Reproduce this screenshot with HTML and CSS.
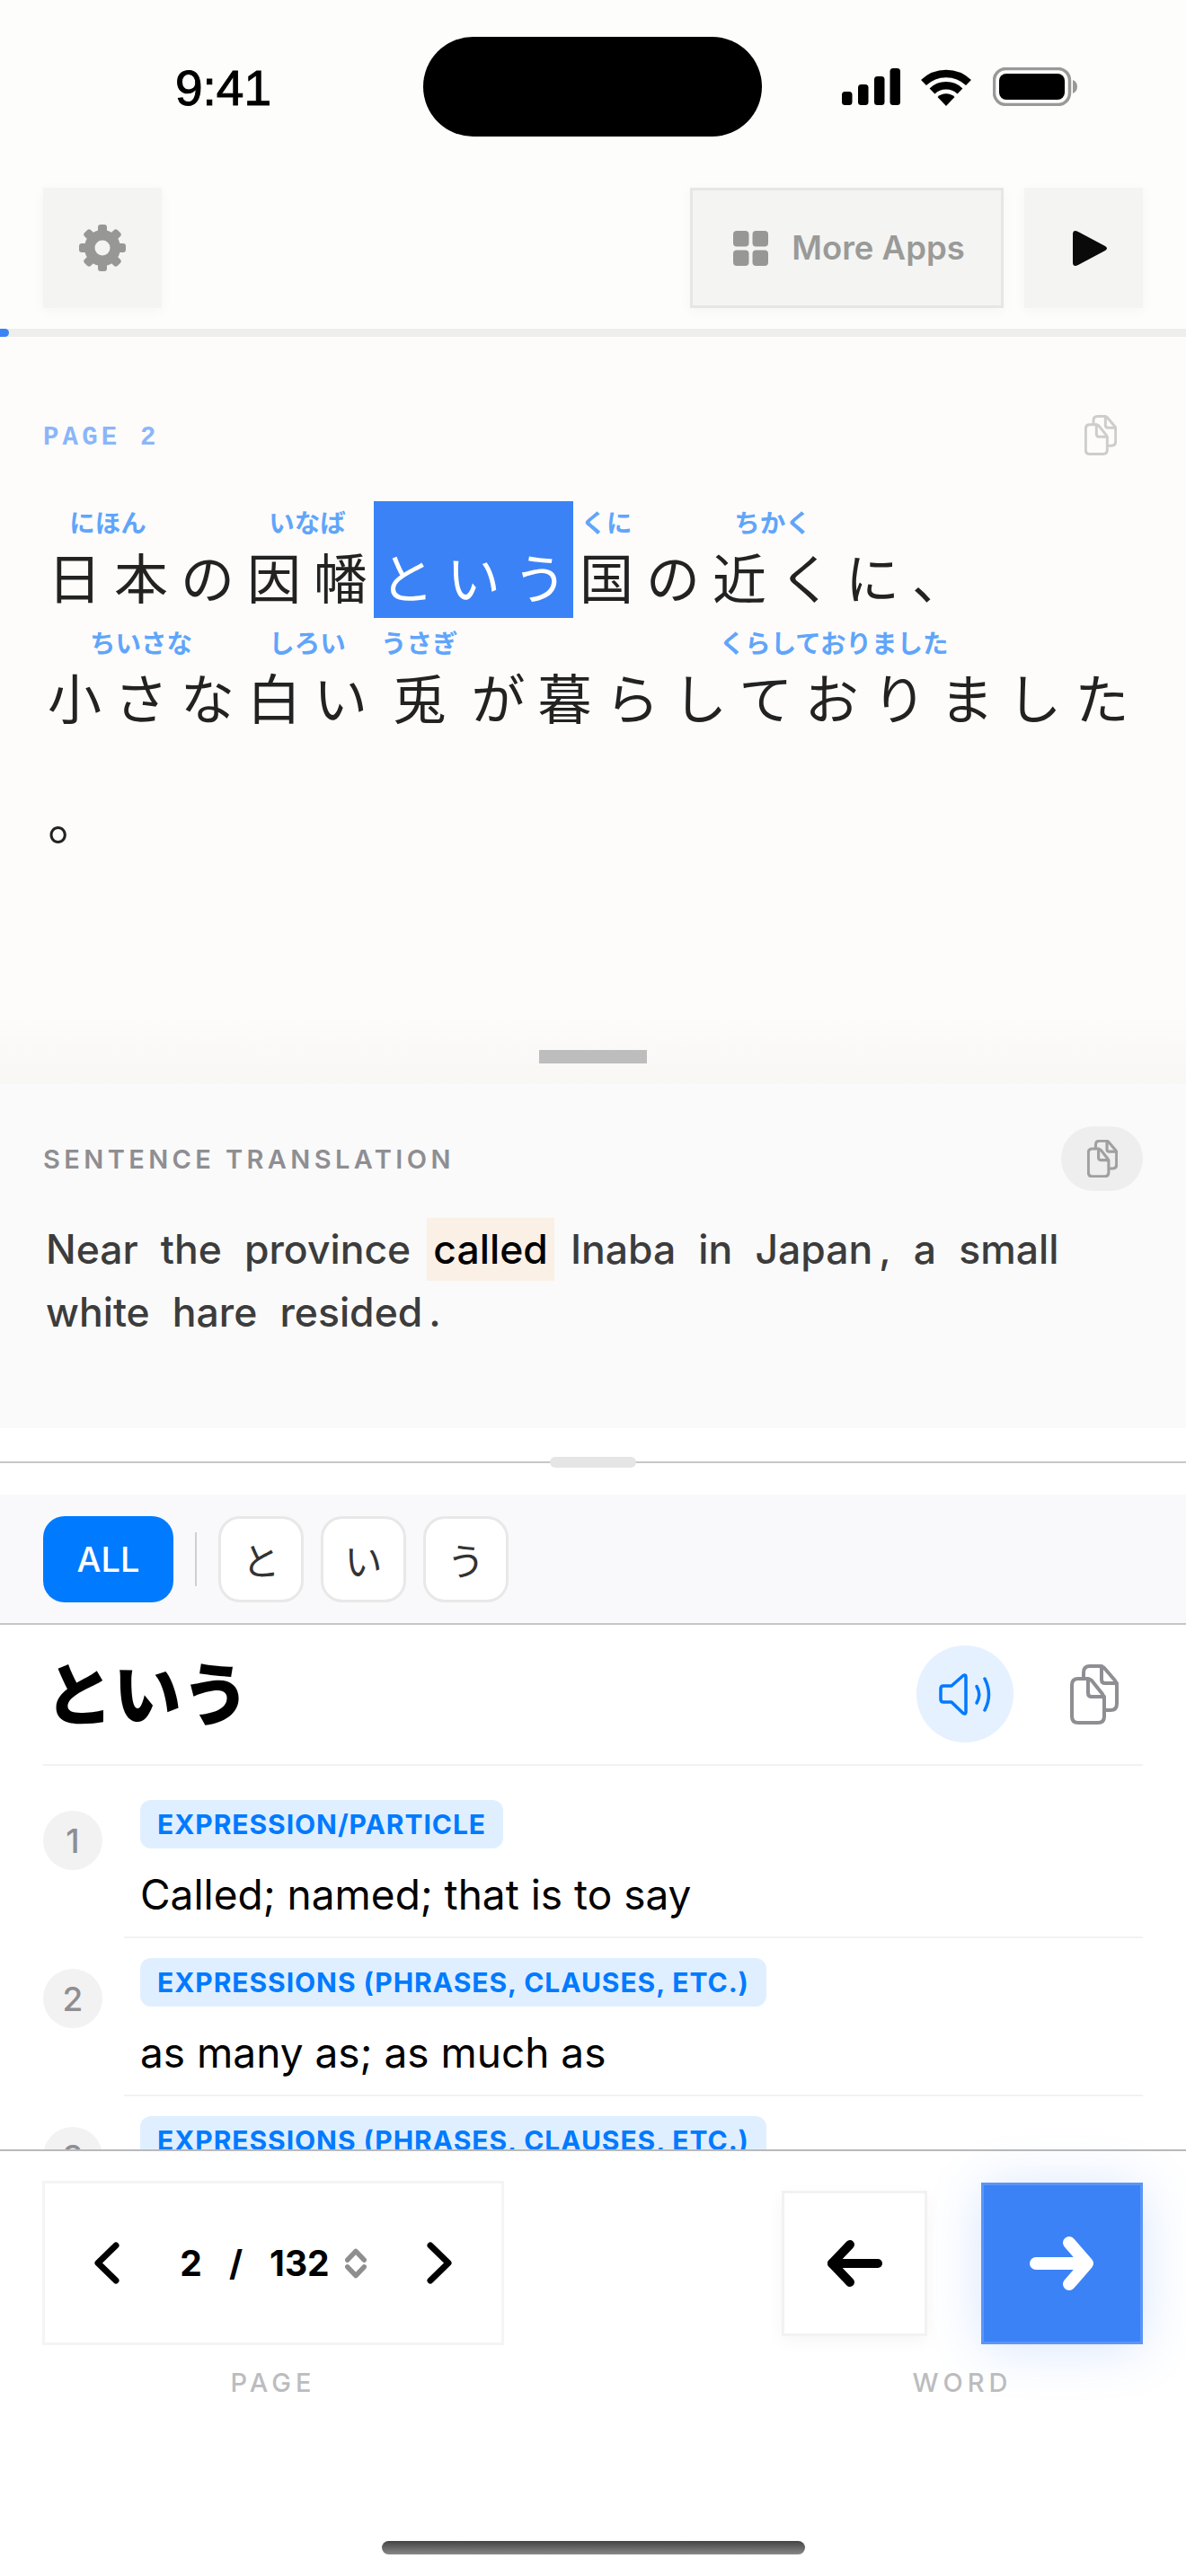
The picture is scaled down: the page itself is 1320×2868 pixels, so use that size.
FILE: index.html
```html
<!DOCTYPE html>
<html lang="ja">
<head>
<meta charset="utf-8">
<title>Reader</title>
<link rel="stylesheet" href="styles.css">
</head>
<body>
<svg class="sprite" aria-hidden="true">
  <symbol id="copy" viewBox="0 0 54 67">
    <path d="M15 15V9Q15 2 22 2H33Q36 2 38 4L50 18Q52 21 52 24V44Q52 51 45 51H39"/>
    <path d="M35 2V17Q35 21 39 21H52"/>
    <path d="M9 16H19Q22 16 24 18L36 33Q38 36 38 39V58Q38 65 31 65H9Q2 65 2 58V23Q2 16 9 16Z"/>
    <path d="M20 16V32Q20 36 24 36H38"/>
  </symbol>
</svg>

<header class="status">
  <div class="time-zone"><span class="time">9:41</span></div>
  <div class="island"></div>
  <div class="status-icons">
    <svg class="signal" viewBox="0 0 65 41"><rect x="0" y="26" width="11.5" height="15" rx="3.5"/><rect x="18" y="18" width="11.5" height="23" rx="3.5"/><rect x="36" y="9" width="11.5" height="32" rx="3.5"/><rect x="53.5" y="0" width="11.5" height="41" rx="3.5"/></svg>
    <svg class="wifi" viewBox="0 0 58 43"><path class="arc" d="M4 17A36 36 0 0 1 54 17"/><path class="arc" d="M13.5 26.5A22.5 22.5 0 0 1 44.500 26.500"/><path d="M29 43L19.500 33A14 14 0 0 1 38.500 33Z"/></svg>
    <svg class="battery" viewBox="0 0 94 43"><rect class="shell" x="1.500" y="1.500" width="84" height="40" rx="13"/><rect x="7" y="7" width="73" height="29" rx="8"/><path class="cap" d="M89 14Q94 16 94 21.500Q94 27 89 29Z"/></svg>
  </div>
</header>

<nav class="toolbar">
  <button class="tool tool-square">
    <svg class="gear" viewBox="-26 -26 52 52">
      <circle class="gear-ring" r="14.25"/>
      <rect x="-5" y="-26" width="10" height="11" rx="3"/>
      <rect x="-5" y="-26" width="10" height="11" rx="3" transform="rotate(45)"/>
      <rect x="-5" y="-26" width="10" height="11" rx="3" transform="rotate(90)"/>
      <rect x="-5" y="-26" width="10" height="11" rx="3" transform="rotate(135)"/>
      <rect x="-5" y="-26" width="10" height="11" rx="3" transform="rotate(180)"/>
      <rect x="-5" y="-26" width="10" height="11" rx="3" transform="rotate(225)"/>
      <rect x="-5" y="-26" width="10" height="11" rx="3" transform="rotate(270)"/>
      <rect x="-5" y="-26" width="10" height="11" rx="3" transform="rotate(315)"/>
    </svg>
  </button>
  <div class="toolbar-right">
    <button class="tool tool-apps">
      <svg class="apps" viewBox="0 0 39 39"><rect width="17.500" height="17.500" rx="4"/><rect x="21.500" width="17.500" height="17.500" rx="4"/><rect y="21.500" width="17.500" height="17.500" rx="4"/><rect x="21.500" y="21.500" width="17.500" height="17.500" rx="4"/></svg>
      <span>More Apps</span>
    </button>
    <button class="tool tool-square">
      <svg class="play" viewBox="0 0 38 41"><path d="M0 5Q0-1 6 2L36 18Q40 20.500 36 23L6 39Q0 42 0 36Z"/></svg>
    </button>
  </div>
</nav>

<div class="progress"><div class="progress-fill"></div></div>

<main class="reader">
  <div class="reader-head">
    <span class="page-tag">PAGE 2</span>
    <svg class="copy copy-faint"><use href="#copy"/></svg>
  </div>
  <div class="sentence">
    <div class="row">
      <div class="word"><span class="rt">にほん</span><span class="base">日本</span></div>
      <div class="word"><span class="rt"></span><span class="base">の</span></div>
      <div class="word"><span class="rt">いなば</span><span class="base">因幡</span></div>
      <div class="word word-active"><span class="rt"></span><span class="base">という</span></div>
      <div class="word"><span class="rt rt-tight">くに</span><span class="base">国</span></div>
      <div class="word"><span class="rt"></span><span class="base">の</span></div>
      <div class="word"><span class="rt">ちかく</span><span class="base">近く</span></div>
      <div class="word"><span class="rt"></span><span class="base">に</span></div>
      <div class="word"><span class="rt"></span><span class="base">、</span></div>
    </div>
    <div class="row">
      <div class="word"><span class="rt">ちいさな</span><span class="base">小さな</span></div>
      <div class="word"><span class="rt">しろい</span><span class="base">白い</span></div>
      <div class="word"><span class="rt rt-tight">うさぎ</span><span class="base">兎</span></div>
      <div class="word"><span class="rt"></span><span class="base">が</span></div>
      <div class="word"><span class="rt">くらしておりました</span><span class="base base-long">暮らしておりました</span></div>
    </div>
    <div class="row">
      <div class="word"><span class="rt"></span><span class="base">。</span></div>
    </div>
  </div>
  <div class="reader-handle"></div>
</main>

<section class="translation">
  <div class="translation-head">
    <span class="section-label">SENTENCE TRANSLATION</span>
    <button class="pill"><svg class="copy copy-pill"><use href="#copy"/></svg></button>
  </div>
  <p class="translation-text">
    <span class="tok">Near</span> <span class="tok">the</span> <span class="tok">province</span> <span class="tok tok-hit">called</span> <span class="tok">Inaba</span> <span class="tok">in</span> <span class="tok">Japan</span><span class="punct">,</span> <span class="tok">a</span> <span class="tok">small</span> <span class="tok">white</span> <span class="tok">hare</span> <span class="tok">resided</span><span class="punct">.</span>
  </p>
</section>

<div class="splitter"><div class="splitter-grip"></div></div>

<div class="tabs">
  <button class="tab-all">ALL</button>
  <span class="tab-sep"></span>
  <button class="chip">と</button>
  <button class="chip">い</button>
  <button class="chip">う</button>
</div>

<section class="detail">
  <div class="detail-head">
    <h1 class="headword">という</h1>
    <button class="speak">
      <svg class="speaker" viewBox="0 0 59 47"><path d="M5 14H14L27 2.500Q30 1 30 4V43Q30 46 27 44.500L14 32H5Q2 32 2 29V17Q2 14 5 14Z"/><path d="M42 14.500Q47.500 23.500 42 33"/><path d="M51 6Q60 23.500 51 41"/></svg>
    </button>
    <svg class="copy copy-big"><use href="#copy"/></svg>
  </div>
  <ol class="senses">
    <li class="sense">
      <span class="num">1</span>
      <div class="sense-body"><span class="tag">EXPRESSION/PARTICLE</span><p class="gloss">Called; named; that is to say</p></div>
    </li>
    <li class="sense">
      <span class="num">2</span>
      <div class="sense-body"><span class="tag">EXPRESSIONS (PHRASES, CLAUSES, ETC.)</span><p class="gloss">as many as; as much as</p></div>
    </li>
    <li class="sense">
      <span class="num">3</span>
      <div class="sense-body"><span class="tag">EXPRESSIONS (PHRASES, CLAUSES, ETC.)</span></div>
    </li>
  </ol>
</section>

<footer class="footer">
  <div class="footer-row">
    <div class="group group-page">
      <div class="pager">
        <svg class="chev" viewBox="0 0 28 47"><path d="M24 4L4 23.500L24 43"/></svg>
        <div class="pager-value">
          <span>2</span><span>/</span><span>132</span>
          <svg class="updown" viewBox="0 0 22 31"><path d="M2.500 12L11 3L19.500 12"/><path d="M2.500 19L11 28L19.500 19"/></svg>
        </div>
        <svg class="chev" viewBox="0 0 28 47"><path d="M4 4L24 23.500L4 43"/></svg>
      </div>
      <span class="group-label">PAGE</span>
    </div>
    <div class="group group-word">
      <div class="word-nav">
        <button class="nav-prev"><svg class="arrow-prev" viewBox="0 0 63 52"><path d="M57 26H6"/><path d="M26 5L6 26L26 47"/></svg></button>
        <button class="nav-next"><svg class="arrow-next" viewBox="0 0 72 60"><path d="M7 30H63"/><path d="M44 7L64 30L44 53"/></svg></button>
      </div>
      <span class="group-label">WORD</span>
    </div>
  </div>
  <div class="home-bar"></div>
</footer>
</body>
</html>
```
FILE: styles.css
```css
* { box-sizing: border-box; }
html, body { margin: 0; padding: 0; }
body {
  width: 1320px;
  height: 2868px;
  overflow: hidden;
  display: flex;
  flex-direction: column;
  background: #fdfdfb;
  color: #000;
  font-family: Inter, "Noto Sans CJK JP", sans-serif;
}
button { font: inherit; padding: 0; margin: 0; border: 0; background: none; color: inherit; }
h1, p, ol { margin: 0; padding: 0; }
.sprite { display: none; }
.copy { fill: none; stroke: currentColor; stroke-linecap: round; stroke-linejoin: round; }

/* status */
.status { height: 209px; flex: none; display: grid; grid-template-columns: 471px 377px 1fr; align-items: start; }
.time-zone { padding: 68px 0 0 195px; }
.time { display: block; font: 400 55px/60px "Liberation Sans", sans-serif; -webkit-text-stroke: 1px #000; }
.island { height: 111px; margin-top: 41px; background: #000; border-radius: 56px; }
.status-icons { display: flex; align-items: flex-end; height: 43px; margin-top: 75px; padding-left: 89px; }
.signal { width: 65px; height: 41px; margin-bottom: 1px; }
.wifi { width: 58px; height: 43px; margin-left: 22px; }
.wifi .arc { fill: none; stroke: #000; stroke-width: 8.500px; }
.battery { width: 94px; height: 43px; margin-left: 23px; }
.battery .shell { fill: none; stroke: #999; stroke-width: 3.500px; }
.battery .cap { fill: #999; }

/* toolbar */
.toolbar { flex: none; height: 134px; padding: 0 48px; display: flex; justify-content: space-between; }
.toolbar-right { display: flex; gap: 23px; }
.tool { height: 134px; display: flex; align-items: center; justify-content: center; background: #f4f4f2; box-shadow: 0 3px 14px rgba(0,0,0,.035); }
.tool-square { width: 132px; }
.tool-apps { width: 349px; padding-left: 5px; gap: 26px; border: 3px solid #e6e6e4; color: #9a9a98; font-size: 36.500px; font-weight: 600; }
.gear { width: 52px; height: 52px; fill: #979795; }
.gear-ring { fill: none; stroke: #979795; stroke-width: 11.500px; }
.apps { width: 39px; height: 39px; fill: #979795; }
.play { width: 38px; height: 41px; margin-left: 14px; fill: #0a0a0a; }
.progress { flex: none; height: 9px; margin-top: 23px; background: #eeeeec; }
.progress-fill { width: 10px; height: 9px; background: #3b82f6; border-radius: 0 5px 5px 0; }

/* reader */
.reader {
  flex: none;
  height: 831px;
  display: flex;
  flex-direction: column;
  background: linear-gradient(#fdfcfb calc(100% - 80px), #f8f7f4);
}
.reader-head { height: 183px; padding: 87px 77px 0 48px; display: flex; justify-content: space-between; align-items: flex-start; }
.page-tag { margin-top: 4px; font: 700 29px/44px "Liberation Mono", monospace; letter-spacing: 4.200px; color: #8ab6f9; }
.copy-faint { width: 36px; height: 45px; stroke-width: 4.500px; color: #cdcdcd; }
.sentence { padding-left: 46px; display: flex; flex-direction: column; gap: 4px; }
.row { display: flex; height: 130px; }
.word { display: flex; flex-direction: column; align-items: center; height: 130px; }
.rt { height: 46px; padding: 0 10px; font: 700 28.500px/46px "Noto Sans CJK JP", sans-serif; color: #60a5fa; white-space: nowrap; }
.rt-tight { padding: 0 8px; }
.base { height: 84px; margin: 0 -7px 0 7px; font: 400 60px/74px "Noto Sans CJK JP", sans-serif; letter-spacing: 14px; color: #222; white-space: nowrap; }
.base-long { letter-spacing: 15.200px; }
.word-active { background: #3b82f6; }
.word-active .base { color: #fff; }
.reader-handle { width: 120px; height: 15px; margin: auto auto 22px; background: #bdbdbd; }

/* translation */
.translation { flex: none; height: 384px; padding: 48px 48px 0; background: #fafafa; }
.translation-head { display: flex; justify-content: space-between; align-items: center; height: 72px; }
.section-label { font-size: 29px; font-weight: 600; letter-spacing: 4.400px; color: #8e8e93; }
.pill { width: 91px; height: 72px; border-radius: 36px; background: #eeeeee; display: flex; align-items: center; justify-content: center; }
.copy-pill { width: 34px; height: 42px; stroke-width: 5px; color: #a0a0a0; }
.translation-text { margin: 30px 0 0 -4px; font-size: 44.500px; font-weight: 450; word-spacing: -.8px; line-height: 70px; color: #3c3c3c; }
.tok { display: inline-block; padding: 0 7px; }
.tok-hit { background: #faf0e6; color: #000; }
.punct { display: inline-block; padding-right: 7px; }

/* splitter */
.splitter { flex: none; height: 74px; background: #fff; position: relative; }
.splitter::after { content: ""; display: block; position: absolute; left: 0; right: 0; top: 37px; height: 2px; background: #c6c6c8; }
.splitter-grip { position: absolute; z-index: 1; left: 612px; top: 32px; width: 96px; height: 12px; border-radius: 6px; background: #e5e5e5; }

/* tabs */
.tabs { flex: none; height: 145px; padding: 0 48px; display: flex; align-items: center; background: #f9f9fb; border-bottom: 2px solid #c6c6c8; }
.tab-all { width: 145px; height: 96px; border-radius: 24px; background: #007aff; color: #fff; font-size: 38px; font-weight: 500; }
.tab-sep { width: 2px; height: 60px; margin: 0 24px; background: #d0d0d2; }
.chip { width: 95px; height: 96px; margin-right: 19px; border: 3px solid #e8e8e8; border-radius: 24px; background: #fff; color: #333; font: 400 42px/1 "Noto Sans CJK JP", sans-serif; }

/* detail */
.detail { flex: none; height: 584px; overflow: hidden; background: #fff; padding: 0 48px; }
.detail-head { height: 157px; padding: 23px 0 24px; display: flex; align-items: center; border-bottom: 2px solid #f2f2f2; }
.headword { flex: 1; margin: -8px 0 0 2px; font: 900 76px/1 "Noto Sans CJK JP", sans-serif; }
.speak { width: 108px; height: 108px; border-radius: 50%; background: #e5f1ff; display: flex; align-items: center; justify-content: center; }
.speaker { width: 59px; height: 47px; fill: none; stroke: #007aff; stroke-width: 3.500px; stroke-linecap: round; stroke-linejoin: round; }
.copy-big { width: 54px; height: 67px; margin: 0 27px 0 63px; stroke-width: 4px; color: #8e8e93; }
.senses { list-style: none; padding-top: 16px; }
.sense { display: flex; gap: 24px; height: 176px; }
.num { flex: none; width: 66px; height: 66px; margin-top: 34px; border-radius: 50%; background: #f2f2f2; color: #8e8e93; font-size: 37px; font-weight: 500; display: flex; align-items: center; justify-content: center; }
.sense-body { flex: 1; padding: 22px 0 0 18px; border-bottom: 2px solid #f2f2f2; }
.tag { display: inline-block; height: 54px; padding: 0 19px; border-radius: 12px; background: #e0efff; color: #007aff; font-size: 30px; line-height: 54px; font-weight: 700; letter-spacing: .95px; }
.gloss { margin-top: 21px; font-size: 46px; line-height: 60px; color: #000; }

/* footer */
.footer { flex: 1; display: flex; flex-direction: column; background: #fff; border-top: 2px solid #b9b9bb; position: relative; }
.footer-row { display: flex; justify-content: space-between; padding: 33px 48px 0 47px; }
.group { display: flex; flex-direction: column; align-items: center; }
.group-label { margin-top: 24px; font-size: 29px; line-height: 36px; font-weight: 500; letter-spacing: 5px; color: #bcbcbf; }
.pager { width: 514px; height: 183px; padding: 0 55px; display: flex; align-items: center; justify-content: space-between; border: 3px solid #f4f4f4; }
.chev { width: 28px; height: 47px; fill: none; stroke: #000; stroke-width: 7px; stroke-linecap: round; stroke-linejoin: round; }
.pager-value { display: flex; align-items: center; gap: 30px; font-size: 39px; font-weight: 700; }
.updown { width: 24px; height: 34px; margin-left: -13px; fill: none; stroke: #8e8e8e; stroke-width: 5px; stroke-linecap: round; stroke-linejoin: round; }
.word-nav { width: 402px; height: 183px; display: flex; align-items: center; justify-content: space-between; }
.nav-prev { width: 162px; height: 162px; display: flex; align-items: center; justify-content: center; background: #fff; border: 3px solid #f2f2f2; box-shadow: 0 6px 18px rgba(0,0,0,.04); }
.nav-next { width: 180px; height: 180px; display: flex; align-items: center; justify-content: center; background: #3b82f6; border: 3px solid #5b95f8; box-shadow: 0 4px 60px rgba(59,130,246,.2); }
.arrow-prev { width: 63px; height: 52px; fill: none; stroke: #000; stroke-width: 10px; stroke-linecap: round; stroke-linejoin: round; }
.arrow-next { width: 72px; height: 60px; fill: none; stroke: #fff; stroke-width: 14px; stroke-linecap: round; stroke-linejoin: round; }
.home-bar { width: 471px; height: 15px; margin: auto auto 24px; border-radius: 8px; background: linear-gradient(#444, #888); }
```
